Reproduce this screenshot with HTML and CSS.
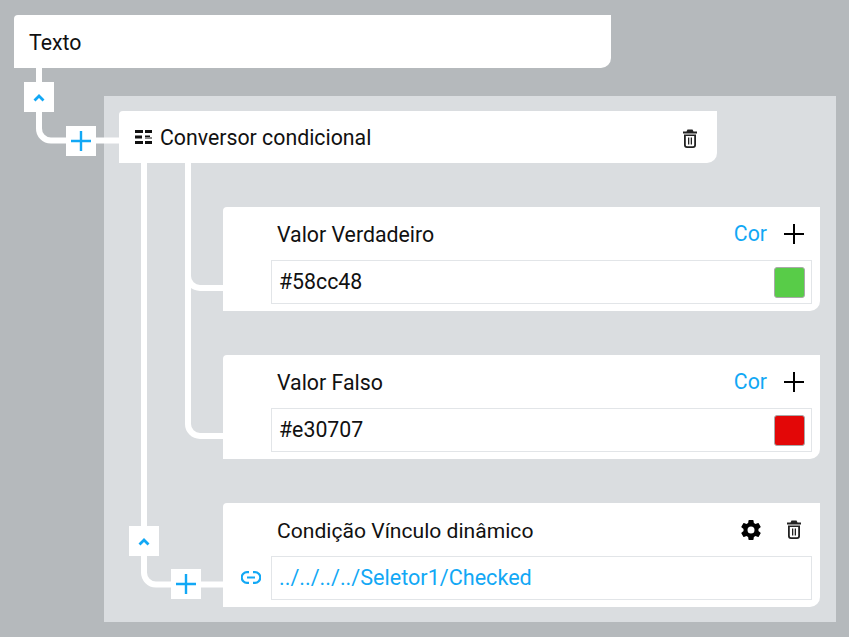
FILE: index.html
```html
<!DOCTYPE html>
<html lang="pt_br">
<head>
    <meta charset="UTF-8">
    <meta name="viewport" content="width=device-width, initial-scale=1.0">
    <title>Conversor condicional</title>
    <link rel="stylesheet" href="styles.css">
</head>
<body>
    <div class="stage">
        <div class="card card-root">
            <span class="title">Texto</span>
        </div>

        <div class="panel">
            <div class="card card-head">
                <svg class="icon-conv" viewBox="0 0 17 14"><path d="M0 0h8v3H0zM10 0h7v3h-7zM0 5.500h7v3H0zM10 5.500h5v1.500h-5zM10 7.500h7v1h-7zM0 11h8v3H0zM10 11h7v3h-7z"/></svg>
                <span class="title">Conversor condicional</span>
                <svg class="icon-trash" viewBox="0 0 14 19"><path fill-rule="evenodd" d="M4.500.5h5l1 2H14v2H0v-2h3.500zM1 5.500h12V16a3 3 0 0 1-3 3H4a3 3 0 0 1-3-3zM2.800 7v9a1.300 1.300 0 0 0 1.300 1.300h5.800a1.300 1.300 0 0 0 1.300-1.300V7zM5 8.500h1.300v7H5zM7.700 8.500H9v7H7.700z"/></svg>
            </div>

            <div class="card card-prop">
                <div class="prop-head">
                    <span class="title">Valor Verdadeiro</span>
                    <span class="link">Cor</span>
                    <svg class="icon-add" viewBox="0 0 20 20"><path d="M10 0v20M0 10h20"/></svg>
                </div>
                <div class="field">
                    <span class="value">#58cc48</span>
                    <span class="swatch swatch-green"></span>
                </div>
            </div>

            <div class="card card-prop">
                <div class="prop-head">
                    <span class="title">Valor Falso</span>
                    <span class="link">Cor</span>
                    <svg class="icon-add" viewBox="0 0 20 20"><path d="M10 0v20M0 10h20"/></svg>
                </div>
                <div class="field">
                    <span class="value">#e30707</span>
                    <span class="swatch swatch-red"></span>
                </div>
            </div>

            <div class="card card-prop">
                <div class="prop-head">
                    <span class="title title-long">Condição Vínculo dinâmico</span>
                    <svg class="icon-gear" viewBox="0 0 24 24"><path d="M12 15.500A3.500 3.500 0 1 1 12 8.500a3.500 3.500 0 0 1 0 7zm7.430-2.530c.04-.32.07-.64.07-.97s-.03-.66-.07-1l2.110-1.630a.5.500 0 0 0 .12-.64l-2-3.460a.5.500 0 0 0-.61-.22l-2.490 1a7.300 7.300 0 0 0-1.690-.98l-.37-2.650A.5.500 0 0 0 14 2h-4a.5.500 0 0 0-.5.420l-.37 2.650c-.61.250-1.170.59-1.690.98l-2.490-1a.5.500 0 0 0-.61.220l-2 3.460a.5.500 0 0 0 .12.640L4.570 11c-.04.340-.07.670-.07 1s.03.650.07.970l-2.110 1.660a.5.500 0 0 0-.12.640l2 3.460c.12.220.39.300.61.220l2.490-1.010c.52.400 1.080.740 1.690.990l.37 2.650c.04.240.25.420.5.420h4c.25 0 .46-.18.5-.42l.37-2.650c.61-.25 1.170-.59 1.690-.99l2.490 1.010c.22.080.49 0 .61-.22l2-3.460a.5.500 0 0 0-.12-.64l-2.110-1.660z"/></svg>
                    <svg class="icon-trash" viewBox="0 0 14 19"><path fill-rule="evenodd" d="M4.500.5h5l1 2H14v2H0v-2h3.500zM1 5.500h12V16a3 3 0 0 1-3 3H4a3 3 0 0 1-3-3zM2.800 7v9a1.300 1.300 0 0 0 1.300 1.300h5.800a1.300 1.300 0 0 0 1.300-1.300V7zM5 8.500h1.300v7H5zM7.700 8.500H9v7H7.700z"/></svg>
                </div>
                <div class="field">
                    <span class="value value-path link">../../../../Seletor1/Checked</span>
                    <svg class="icon-link" viewBox="0 0 20 13"><path d="M8 1.200H6a5.300 5.300 0 0 0 0 10.600h2M12 1.200h2a5.300 5.300 0 0 1 0 10.600h-2M6 6.500h8"/></svg>
                </div>
            </div>
        </div>

        <!-- ligacoes entre os nos -->
        <svg class="wires" viewBox="0 0 849 637">
            <path d="M39 68V128a12 12 0 0 0 12 12.500H119"/>
            <path d="M144 163V572a12 12 0 0 0 12 12.500H223"/>
            <path d="M188 163V276a12 12 0 0 0 12 12H223"/>
            <path d="M188 276V424a12 12 0 0 0 12 12H223"/>
        </svg>
        <button class="node-btn btn-up btn-up-a"><svg viewBox="0 0 12 8"><path d="M1.500 6.500 6 2l4.500 4.500"/></svg></button>
        <button class="node-btn btn-add btn-add-a"><svg viewBox="0 0 20 20"><path d="M10 0v20M0 10h20"/></svg></button>
        <button class="node-btn btn-up btn-up-b"><svg viewBox="0 0 12 8"><path d="M1.500 6.500 6 2l4.500 4.500"/></svg></button>
        <button class="node-btn btn-add btn-add-b"><svg viewBox="0 0 20 20"><path d="M10 0v20M0 10h20"/></svg></button>
    </div>
</body>
</html>
```

FILE: styles.css
```css
html, body {margin: 0; height: 100%; overflow: hidden;}
body {background-color: #b5b9bc; font-family: "Roboto", "Liberation Sans", sans-serif; font-size: 21.3px; color: #111;}
.stage {position: relative; width: 849px; height: 637px; padding: 15px 0 0 14px; box-sizing: border-box;}

.card {background-color: #fff; border-radius: 4px 0 10px 0; box-sizing: border-box;}
.title {line-height: 24px;}
.title-long {font-size: 21.1px;}
.link {color: #12a8f5;}

.card-root {width: 597px; height: 53px; display: flex; align-items: center; padding: 2px 0 0 15px;}

.panel {width: 732px; height: 526px; margin: 28px 0 0 90px; padding: 15px; box-sizing: border-box; background-color: #dadde0;}
.card-head {width: 598px; height: 52px; display: flex; align-items: center; padding: 2px 20px 0 16px;}
.card-head .title {flex: 1;}
.icon-conv {width: 17px; height: 14px; margin: 0 8px 2px 0; fill: #111;}
.icon-trash {width: 14px; height: 19px; fill: #222;}

.card-prop {width: 597px; height: 104px; margin: 44px 0 0 104px; padding: 0 8px 0 48px;}
.prop-head {height: 53px; display: flex; align-items: center; padding-left: 6px;}
.prop-head .title {flex: 1; padding-top: 2px;}
.prop-head .link {margin-right: 17px;}
.icon-add {width: 20px; height: 20px; margin-right: 8px; stroke: #000; stroke-width: 2; fill: none;}
.icon-gear {width: 24px; height: 24px; margin-right: 24px; fill: #000;}
.prop-head .icon-trash {margin-right: 11px;}

.field {position: relative; height: 44px; display: flex; align-items: center; justify-content: space-between; padding: 0 6px 0 7px; background-color: #fff; border: 1px solid #e2e5e8; box-sizing: border-box;}
.value {margin-bottom: 2px;}
.value-path {font-size: 21.6px;}
.swatch {width: 31px; height: 31px; border: 1px solid #a9a9a9; border-radius: 3px; box-sizing: border-box;}
.swatch-green {background-color: #58cc48;}
.swatch-red {background-color: #e30707;}
.icon-link {position: absolute; left: -31px; top: 14px; width: 20px; height: 13px; fill: none; stroke: #12a8f5; stroke-width: 2.200;}

.wires {position: absolute; left: 0; top: 0; width: 849px; height: 637px; fill: none; stroke: #fff; stroke-width: 6; pointer-events: none;}

.node-btn {position: absolute; width: 30px; height: 30px; padding: 0; border: 0; background-color: #fff; display: flex; align-items: center; justify-content: center;}
.btn-up svg {width: 12px; height: 8px; margin-top: 2px; fill: none; stroke: #12a8f5; stroke-width: 2.800;}
.btn-add svg {width: 20px; height: 20px; fill: none; stroke: #12a8f5; stroke-width: 2.400;}
.btn-up-a {left: 24px; top: 82px;}
.btn-add-a {left: 66px; top: 126px;}
.btn-up-b {left: 129px; top: 526px;}
.btn-add-b {left: 171px; top: 569px;}
```
